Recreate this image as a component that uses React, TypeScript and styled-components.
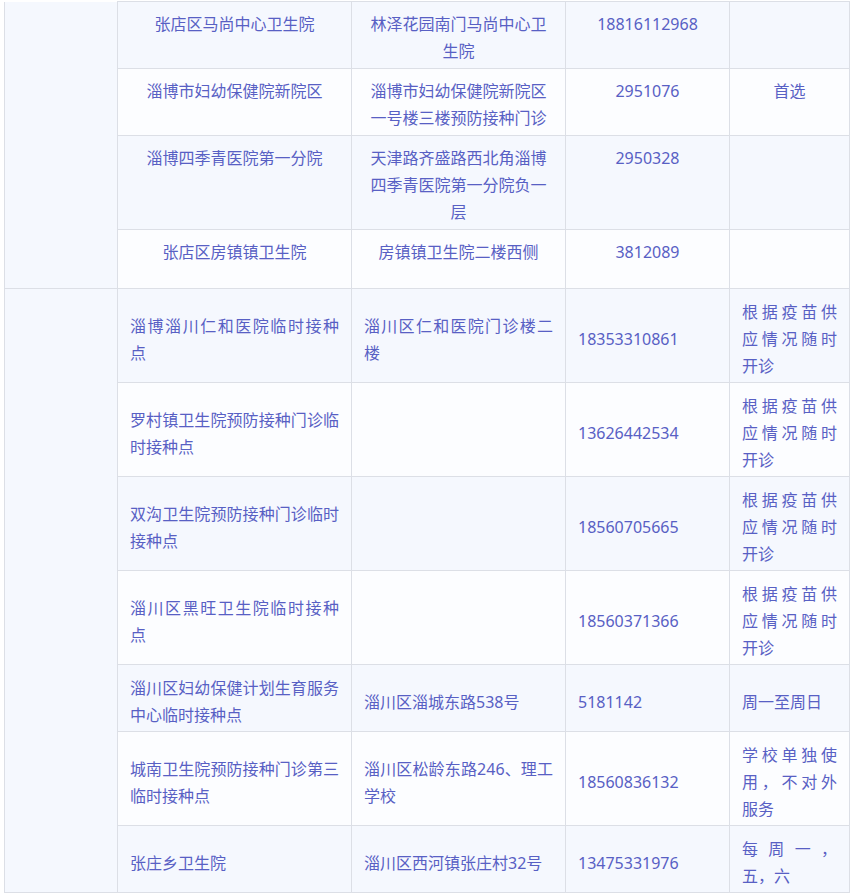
import React from 'react';
import styled, { createGlobalStyle, css } from 'styled-components';

const Global = createGlobalStyle`
  html, body {
    margin: 0;
    padding: 0;
    background: #ffffff;
  }
  body {
    font-family: "Microsoft YaHei", "Noto Sans", "Noto Sans CJK SC", sans-serif;
  }
`;

const Page = styled.div`
  padding: 1px 0 0 4px;
`;

const Table = styled.table`
  border-collapse: collapse;
  table-layout: fixed;
  width: 845px;
  font-size: 16px;
  line-height: 27px;
  color: #5860c4;
`;

const Col = styled.col<{ $w: number }>`
  width: ${(p) => p.$w}px;
`;

const Row = styled.tr<{ $h: number; $alt: boolean }>`
  height: ${(p) => p.$h}px;
  background: ${(p) => (p.$alt ? '#fcfdff' : '#f5f8fe')};
`;

const GroupCell = styled.td<{ $noTop?: boolean }>`
  border: 1px solid #dcdfe6;
  background: #f5f8fe;
  ${(p) =>
    p.$noTop &&
    css`
      border-top: none;
    `}
`;

const Cell = styled.td<{ $variant: 'center' | 'left' }>`
  border: 1px solid #dcdfe6;
  box-sizing: border-box;
  overflow: hidden;
  ${(p) =>
    p.$variant === 'center'
      ? css`
          text-align: center;
          vertical-align: top;
          padding: 9px 12px 0;
        `
      : css`
          text-align: left;
          vertical-align: middle;
          padding: 8px 12px 0;
        `}
`;

const Line = styled.div<{ $justify?: boolean }>`
  white-space: nowrap;
  ${(p) =>
    p.$justify &&
    css`
      text-align: justify;
      text-align-last: justify;
      text-justify: inter-character;
    `}
`;

type L = { t: string; j?: boolean };
type RowData = { h: number; cells: L[][] };

const columns = [113, 234, 214, 164, 120];

const top: RowData[] = [
  {
    h: 67,
    cells: [
      [{ t: '张店区马尚中心卫生院' }],
      [{ t: '林泽花园南门马尚中心卫' }, { t: '生院' }],
      [{ t: '18816112968' }],
      [],
    ],
  },
  {
    h: 67,
    cells: [
      [{ t: '淄博市妇幼保健院新院区' }],
      [{ t: '淄博市妇幼保健院新院区' }, { t: '一号楼三楼预防接种门诊' }],
      [{ t: '2951076' }],
      [{ t: '首选' }],
    ],
  },
  {
    h: 94,
    cells: [
      [{ t: '淄博四季青医院第一分院' }],
      [{ t: '天津路齐盛路西北角淄博' }, { t: '四季青医院第一分院负一' }, { t: '层' }],
      [{ t: '2950328' }],
      [],
    ],
  },
  {
    h: 59,
    cells: [
      [{ t: '张店区房镇镇卫生院' }],
      [{ t: '房镇镇卫生院二楼西侧' }],
      [{ t: '3812089' }],
      [],
    ],
  },
];

const supply: L[] = [{ t: '根据疫苗供', j: true }, { t: '应情况随时', j: true }, { t: '开诊' }];

const bottom: RowData[] = [
  {
    h: 94,
    cells: [
      [{ t: '淄博淄川仁和医院临时接种', j: true }, { t: '点' }],
      [{ t: '淄川区仁和医院门诊楼二', j: true }, { t: '楼' }],
      [{ t: '18353310861' }],
      supply,
    ],
  },
  {
    h: 94,
    cells: [
      [{ t: '罗村镇卫生院预防接种门诊临', j: true }, { t: '时接种点' }],
      [],
      [{ t: '13626442534' }],
      supply,
    ],
  },
  {
    h: 94,
    cells: [
      [{ t: '双沟卫生院预防接种门诊临时', j: true }, { t: '接种点' }],
      [],
      [{ t: '18560705665' }],
      supply,
    ],
  },
  {
    h: 94,
    cells: [
      [{ t: '淄川区黑旺卫生院临时接种', j: true }, { t: '点' }],
      [],
      [{ t: '18560371366' }],
      supply,
    ],
  },
  {
    h: 67,
    cells: [
      [{ t: '淄川区妇幼保健计划生育服务', j: true }, { t: '中心临时接种点' }],
      [{ t: '淄川区淄城东路538号' }],
      [{ t: '5181142' }],
      [{ t: '周一至周日' }],
    ],
  },
  {
    h: 94,
    cells: [
      [{ t: '城南卫生院预防接种门诊第三', j: true }, { t: '临时接种点' }],
      [{ t: '淄川区松龄东路246、理工', j: true }, { t: '学校' }],
      [{ t: '18560836132' }],
      [{ t: '学校单独使', j: true }, { t: '用，不对外', j: true }, { t: '服务' }],
    ],
  },
  {
    h: 67,
    cells: [
      [{ t: '张庄乡卫生院' }],
      [{ t: '淄川区西河镇张庄村32号' }],
      [{ t: '13475331976' }],
      [{ t: '每周一，', j: true }, { t: '五，六' }],
    ],
  },
];

function Group({
  rows,
  variant,
  noTop,
}: {
  rows: RowData[];
  variant: 'center' | 'left';
  noTop?: boolean;
}) {
  return (
    <>
      {rows.map((r, i) => (
        <Row key={i} $h={r.h} $alt={i % 2 === 1}>
          {i === 0 && <GroupCell rowSpan={rows.length} $noTop={noTop} />}
          {r.cells.map((lines, k) => (
            <Cell key={k} $variant={variant}>
              {lines.map((l, n) => (
                <Line key={n} $justify={l.j}>
                  {l.t}
                </Line>
              ))}
            </Cell>
          ))}
        </Row>
      ))}
    </>
  );
}

export default function App() {
  return (
    <>
      <Global />
      <Page>
        <Table>
          <colgroup>
            {columns.map((w, i) => (
              <Col key={i} $w={w} />
            ))}
          </colgroup>
          <tbody>
            <Group rows={top} variant="center" noTop />
            <Group rows={bottom} variant="left" />
          </tbody>
        </Table>
      </Page>
    </>
  );
}
